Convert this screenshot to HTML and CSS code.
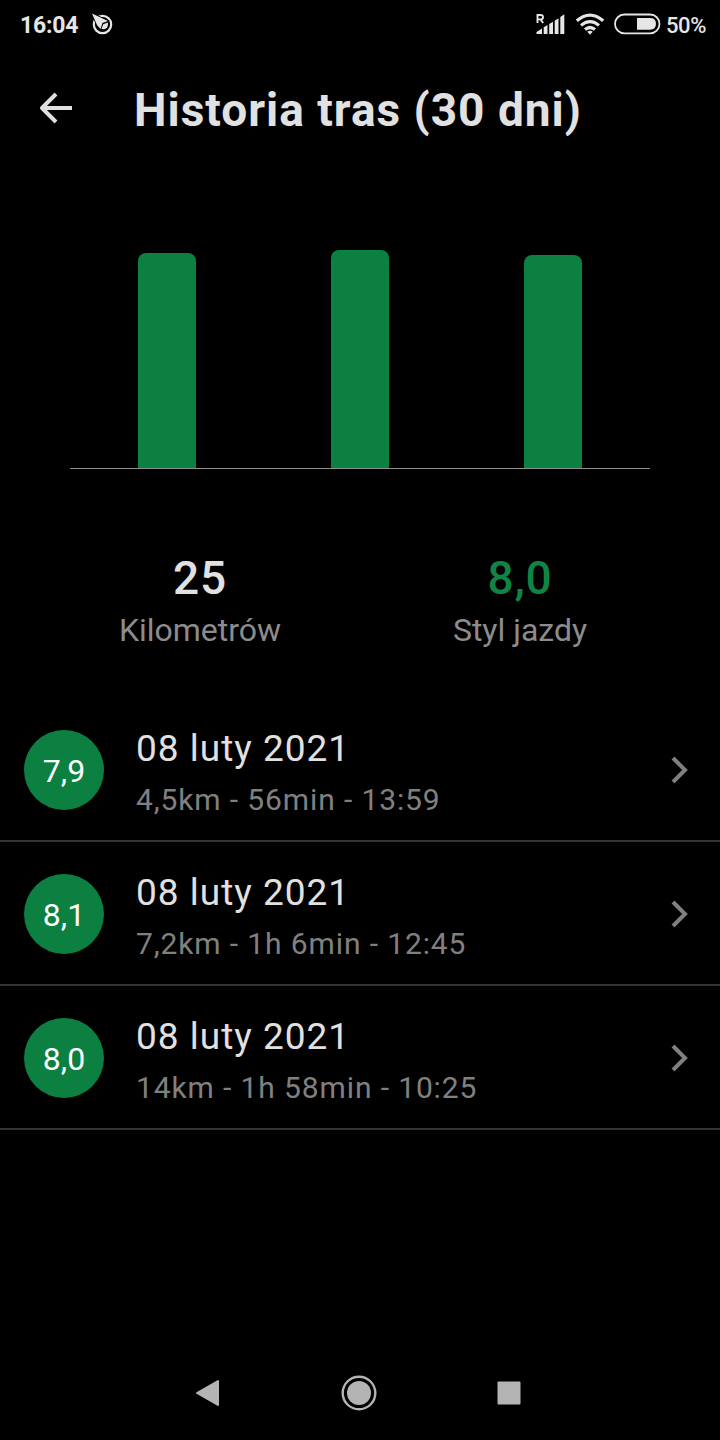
FILE: index.html
```html
<!DOCTYPE html>
<html lang="pl">
<head>
    <meta charset="UTF-8">
    <meta name="viewport" content="width=device-width, initial-scale=1.0">
    <title>Historia tras</title>
    <link rel="stylesheet" href="styles.css">
</head>
<body>
    <div class="status">
        <span class="clock">16:04</span>
        <svg class="notify" width="22" height="22" viewBox="0 0 22 22">
            <circle cx="10.5" cy="11.500" r="8.700" fill="none" stroke="#e6e6e6" stroke-width="2.200"/>
            <path d="M0 0.500L16 8L10.500 10L8.500 16L5 12Z" fill="#e6e6e6" stroke="#000" stroke-width="1.600" paint-order="stroke"/>
            <path d="M9.500 15.800L11.200 11.200L15.800 9.500Q16.600 13.500 14 15.500Q12 16.800 9.500 15.800Z" fill="#e6e6e6"/>
        </svg>
        <svg class="signal" width="29" height="22" viewBox="0 0 29 22">
            <path d="M1.500 10V2H4.500Q7 2 7 4.200T4.500 6.400H1.500M4.500 6.400L7.200 10" fill="none" stroke="#e6e6e6" stroke-width="1.900"/>
            <path d="M0.500 21V19L6 15.500V21ZM7.700 14.200L11.500 12V21H7.700ZM13.200 11L17 8.800V21H13.200ZM18.700 7.700L22.500 5.300V21H18.700ZM24.300 4L28.300 1.200V21H24.300Z" fill="#e6e6e6"/>
        </svg>
        <svg class="wifi" width="30" height="22" viewBox="0 0 30 22">
            <g fill="none" stroke="#e6e6e6" stroke-width="3.200">
                <path d="M1.800 7.800Q15 -3.600 28.200 7.800"/>
                <path d="M6 12.400Q15 4.800 24 12.400"/>
                <path d="M10 16.600Q15 12.400 20 16.600"/>
            </g>
            <path d="M12.300 18.700Q15 16.700 17.700 18.700L15 21.800Z" fill="#e6e6e6"/>
        </svg>
        <svg class="battery" width="47" height="22" viewBox="0 0 47 22">
            <rect x="1" y="1.500" width="44.500" height="18.800" rx="9.400" fill="none" stroke="#e6e6e6" stroke-width="1.800"/>
            <path d="M23 5H36Q42 5 42 10.800T36 16.800H23Z" fill="#e6e6e6"/>
        </svg>
        <span class="percent">50%</span>
    </div>

    <div class="header">
        <svg class="back" width="34" height="34" viewBox="0 0 34 34">
            <path d="M33 17H4" fill="none" stroke="#e1e1e1" stroke-width="4"/>
            <path d="M17 3L3 17L17 31" fill="none" stroke="#e1e1e1" stroke-width="4" stroke-linejoin="round"/>
        </svg>
        <h1>Historia tras (30 dni)</h1>
    </div>

    <div class="chart">
        <div class="bar" style="height: 215.500px"></div>
        <div class="bar" style="height: 218.200px"></div>
        <div class="bar" style="height: 212.800px"></div>
    </div>

    <div class="stats">
        <div class="stat">
            <div class="value">25</div>
            <div class="label">Kilometrów</div>
        </div>
        <div class="stat">
            <div class="value green">8,0</div>
            <div class="label">Styl jazdy</div>
        </div>
    </div>

    <div class="list">
        <div class="item">
            <div class="score">7,9</div>
            <div class="info">
                <div class="date">08 luty 2021</div>
                <div class="detail">4,5km - 56min - 13:59</div>
            </div>
            <svg class="arrow" width="20" height="30" viewBox="0 0 20 30">
                <path d="M3 3L15 15L3 27" fill="none" stroke="#808080" stroke-width="4"/>
            </svg>
        </div>
        <div class="item">
            <div class="score">8,1</div>
            <div class="info">
                <div class="date">08 luty 2021</div>
                <div class="detail">7,2km - 1h 6min - 12:45</div>
            </div>
            <svg class="arrow" width="20" height="30" viewBox="0 0 20 30">
                <path d="M3 3L15 15L3 27" fill="none" stroke="#808080" stroke-width="4"/>
            </svg>
        </div>
        <div class="item">
            <div class="score">8,0</div>
            <div class="info">
                <div class="date">08 luty 2021</div>
                <div class="detail">14km - 1h 58min - 10:25</div>
            </div>
            <svg class="arrow" width="20" height="30" viewBox="0 0 20 30">
                <path d="M3 3L15 15L3 27" fill="none" stroke="#808080" stroke-width="4"/>
            </svg>
        </div>
    </div>

    <div class="navbar">
        <svg width="26" height="36" viewBox="0 0 26 36">
            <path d="M2 18L23 6V30Z" fill="#b4b4b4" stroke="#b4b4b4" stroke-width="2" stroke-linejoin="round"/>
        </svg>
        <svg width="36" height="36" viewBox="0 0 36 36">
            <circle cx="18" cy="18" r="16.300" fill="none" stroke="#b4b4b4" stroke-width="2.400"/>
            <circle cx="18" cy="18" r="12" fill="#b4b4b4"/>
        </svg>
        <svg width="24" height="36" viewBox="0 0 24 36">
            <rect x="0.500" y="6.500" width="23" height="23" rx="1" fill="#b4b4b4"/>
        </svg>
    </div>
</body>
</html>
```
FILE: styles.css
```css
*{
    box-sizing: border-box;
}
body{
    margin: 0;
    width: 720px;
    height: 1440px;
    display: flex;
    flex-direction: column;
    background-color: #000;
    color: #e1e1e1;
    font-family: Roboto, "Liberation Sans", sans-serif;
    overflow: hidden;
}
svg{
    display: block;
    flex: none;
}
.status{
    height: 48px;
    padding: 2px 14px 0 20px;
    display: flex;
    align-items: center;
    color: #e6e6e6;
}
.clock{
    font-size: 23px;
    font-weight: 700;
    width: 72px;
    letter-spacing: -0.2px;
}
.notify{
    margin-top: -3px;
}
.signal{
    margin-left: auto;
    margin-top: -3px;
}
.wifi{
    margin-left: 10px;
    margin-top: -2px;
}
.battery{
    margin-left: 9px;
    margin-top: -2px;
}
.percent{
    font-size: 22px;
    font-weight: 500;
    margin-left: 5px;
    letter-spacing: -0.4px;
}
.header{
    height: 120px;
    padding-left: 39px;
    display: flex;
    align-items: center;
}
.header h1{
    margin: 4px 0 0 61px;
    font-size: 46px;
    font-weight: 700;
    line-height: 54px;
    letter-spacing: 1px;
    white-space: nowrap;
}
.chart{
    margin: 0 70px;
    height: 301px;
    display: flex;
    justify-content: space-around;
    align-items: flex-end;
    border-bottom: 1px solid #8c8c8c;
}
.bar{
    width: 58px;
    background-color: #0c8040;
    border-radius: 8px 8px 0 0;
}
.stats{
    padding: 82px 40px 0;
    height: 229px;
    display: grid;
    grid-template-columns: 1fr 1fr;
    text-align: center;
}
.value{
    font-size: 46px;
    font-weight: 500;
    line-height: 54px;
    letter-spacing: 0.8px;
}
.value.green{
    color: #0f8545;
}
.label{
    margin-top: 6px;
    font-size: 32px;
    line-height: 38px;
    color: #8c8c8c;
}
.item{
    height: 144px;
    padding: 2px 30px 0 24px;
    display: flex;
    align-items: center;
    border-bottom: 2px solid #333;
}
.score{
    width: 80px;
    height: 80px;
    border-radius: 50%;
    background-color: #0c8040;
    color: #fff;
    font-size: 32px;
    line-height: 82px;
    text-align: center;
}
.info{
    margin-left: 32px;
    padding-top: 4px;
}
.date{
    font-size: 37px;
    line-height: 46px;
    letter-spacing: 1px;
}
.detail{
    margin-top: 10px;
    font-size: 30px;
    line-height: 36px;
    letter-spacing: 0.88px;
    color: #808080;
}
.arrow{
    margin-left: auto;
}
.navbar{
    margin-top: auto;
    height: 96px;
    padding: 1px 199px 0 195px;
    display: flex;
    justify-content: space-between;
    align-items: center;
}
```
